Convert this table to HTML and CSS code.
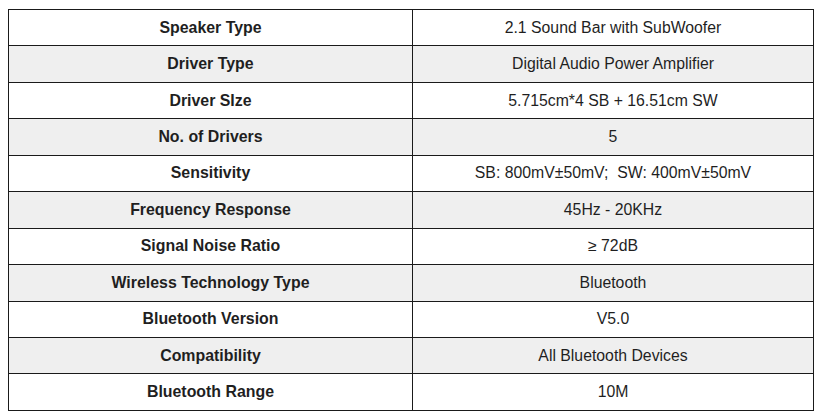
FILE: index.html
```html
<!DOCTYPE html>
<html>
<head>
<meta charset="utf-8">
<link rel="stylesheet" href="styles.css">
</head>
<body>
<table class="spec">
<tbody>
<tr><td class="k">Speaker Type</td><td class="v">2.1 Sound Bar with SubWoofer</td></tr>
<tr class="alt"><td class="k">Driver Type</td><td class="v">Digital Audio Power Amplifier</td></tr>
<tr><td class="k">Driver SIze</td><td class="v">5.715cm*4 SB + 16.51cm SW</td></tr>
<tr class="alt"><td class="k">No. of Drivers</td><td class="v">5</td></tr>
<tr><td class="k">Sensitivity</td><td class="v">SB: 800mV±50mV;&nbsp; SW: 400mV±50mV</td></tr>
<tr class="alt"><td class="k">Frequency Response</td><td class="v">45Hz - 20KHz</td></tr>
<tr><td class="k">Signal Noise Ratio</td><td class="v">≥ 72dB</td></tr>
<tr class="alt"><td class="k">Wireless Technology Type</td><td class="v">Bluetooth</td></tr>
<tr><td class="k">Bluetooth Version</td><td class="v">V5.0</td></tr>
<tr class="alt"><td class="k">Compatibility</td><td class="v">All Bluetooth Devices</td></tr>
<tr><td class="k">Bluetooth Range</td><td class="v">10M</td></tr>
</tbody>
</table>
</body>
</html>
```
FILE: styles.css
```css
html, body {
  margin: 0;
  padding: 0;
  background: #ffffff;
}
body {
  padding: 9px 0 0 8px;
  font-family: "Liberation Sans", Arial, sans-serif;
  color: #1f1f1f;
}
.spec {
  border-collapse: collapse;
  width: 806px;
  table-layout: fixed;
}
.spec td {
  border: 1px solid #1a1a1a;
  height: 36.45px;
  padding: 0;
  text-align: center;
  vertical-align: middle;
  box-sizing: border-box;
}
.spec td.k {
  width: 404px;
  font-weight: bold;
  font-size: 15.9px;
}
.spec td.v {
  font-size: 15.8px;
}
.spec tr.alt td {
  background: #efefef;
}
```
